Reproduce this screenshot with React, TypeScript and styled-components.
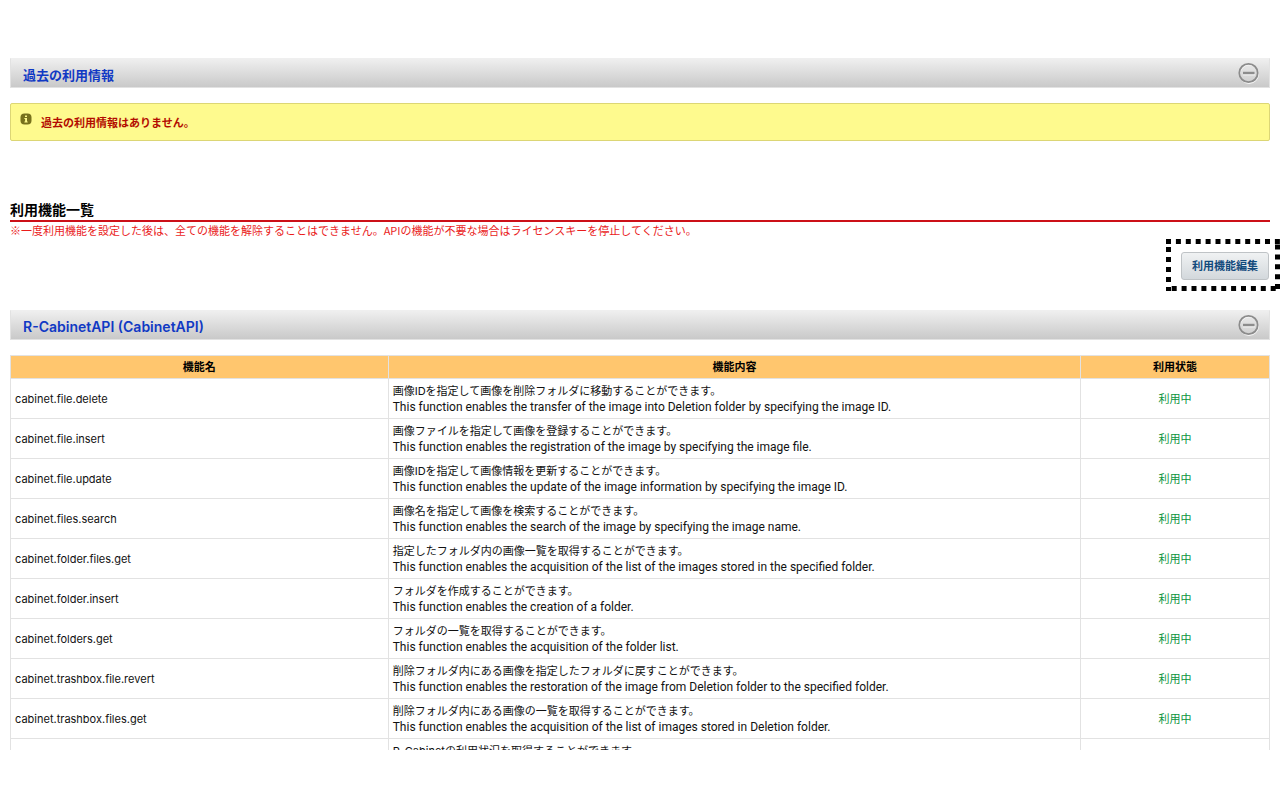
import React from "react";
import styled, { createGlobalStyle } from "styled-components";

const GlobalStyle = createGlobalStyle`
  *, *::before, *::after { box-sizing: border-box; }
  body {
    margin: 0;
    background: #fff;
    color: #111;
    font: 11px/16px Inter, "Noto Sans CJK JP", sans-serif;
  }
`;

const Page = styled.main`
  height: calc(100vh - 50px);
  padding: 58px 10px 0;
  overflow: hidden;
`;

const Bar = styled.div`
  display: flex;
  align-items: center;
  justify-content: space-between;
  height: 30px;
  padding: 0 10px 0 12px;
  border: 1px solid #e2e2e2;
  border-top-color: #efefef;
  background: linear-gradient(#efefef, #c9c9c9);
`;

const BarTitle = styled.h2<{ $large?: boolean }>`
  margin: 0;
  padding-top: 4px;
  color: #1039c4;
  font-size: ${(p) => (p.$large ? "14px" : "13px")};
  font-weight: 600;
`;

const Toggle = styled.button`
  display: flex;
  padding: 0;
  border: 0;
  background: none;
`;

const Notice = styled.div`
  display: flex;
  align-items: flex-start;
  gap: 9px;
  margin: 15px 0 59px;
  padding: 9px;
  border: 1px solid #dcd675;
  border-radius: 2px;
  background: #fefa8e;
  color: #b30c00;
  font-weight: 700;
`;

const NoticeText = styled.p`
  margin: 0;
  padding-top: 2px;
`;

const SectionTitle = styled.h1`
  margin: 0;
  border-bottom: 2px solid #cc1018;
  color: #000;
  font-size: 14px;
  font-weight: 700;
  line-height: 20px;
`;

const Warning = styled.p`
  margin: 0;
  color: #ea1c1c;
  font-family: "Noto Sans CJK JP", sans-serif;
`;

const Actions = styled.div`
  display: flex;
  justify-content: flex-end;
  padding: 14px 1px 30px;
`;

const Callout = styled.div`
  position: relative;
`;

const CalloutFrame = styled.svg`
  position: absolute;
  top: -13px;
  left: -15px;
  pointer-events: none;
`;

const EditButton = styled.button`
  display: block;
  width: 88px;
  height: 28px;
  padding: 0;
  border: 1px solid #bfc3c6;
  border-radius: 3px;
  background: linear-gradient(#f0f2f3, #d3d8dc);
  color: #124a7c;
  font: inherit;
  font-weight: 700;
`;

const Table = styled.table`
  width: 100%;
  margin-top: 15px;
  border-collapse: collapse;
  table-layout: fixed;
`;

const Head = styled.th<{ $width: string }>`
  width: ${(p) => p.$width};
  height: 23px;
  padding: 0;
  border: 1px solid #e2e2e2;
  background: #ffc66e;
  color: #000;
  font-weight: 700;
`;

const Cell = styled.td<{ $status?: boolean }>`
  height: 40px;
  padding: 4px 4px 3px;
  border: 1px solid #e2e2e2;
  color: ${(p) => (p.$status ? "#0a9440" : "inherit")};
  text-align: ${(p) => (p.$status ? "center" : "left")};
`;

const Line = styled.div<{ $latin?: boolean }>`
  min-height: 16px;
  font-family: ${(p) => (p.$latin ? "Roboto, sans-serif" : "inherit")};
  font-size: ${(p) => (p.$latin ? "12px" : "11px")};
`;

type Feature = { name?: string; ja: string; en?: string };

const features: Feature[] = [
  { name: "cabinet.file.delete", ja: "画像IDを指定して画像を削除フォルダに移動することができます。", en: "This function enables the transfer of the image into Deletion folder by specifying the image ID." },
  { name: "cabinet.file.insert", ja: "画像ファイルを指定して画像を登録することができます。", en: "This function enables the registration of the image by specifying the image file." },
  { name: "cabinet.file.update", ja: "画像IDを指定して画像情報を更新することができます。", en: "This function enables the update of the image information by specifying the image ID." },
  { name: "cabinet.files.search", ja: "画像名を指定して画像を検索することができます。", en: "This function enables the search of the image by specifying the image name." },
  { name: "cabinet.folder.files.get", ja: "指定したフォルダ内の画像一覧を取得することができます。", en: "This function enables the acquisition of the list of the images stored in the specified folder." },
  { name: "cabinet.folder.insert", ja: "フォルダを作成することができます。", en: "This function enables the creation of a folder." },
  { name: "cabinet.folders.get", ja: "フォルダの一覧を取得することができます。", en: "This function enables the acquisition of the folder list." },
  { name: "cabinet.trashbox.file.revert", ja: "削除フォルダ内にある画像を指定したフォルダに戻すことができます。", en: "This function enables the restoration of the image from Deletion folder to the specified folder." },
  { name: "cabinet.trashbox.files.get", ja: "削除フォルダ内にある画像の一覧を取得することができます。", en: "This function enables the acquisition of the list of images stored in Deletion folder." },
  { ja: "R-Cabinetの利用状況を取得することができます。" },
];

function CollapseButton({ label }: { label: string }) {
  return (
    <Toggle type="button" aria-label={label}>
      <svg width="22" height="22" viewBox="0 0 22 22" fill="none">
        <circle cx="12" cy="12" r="9.2" stroke="#f6f6f6" strokeWidth="1.6" />
        <circle cx="11.5" cy="11" r="9.2" stroke="#8c8c8c" strokeWidth="1.8" />
        <path d="M6 12.8h12" stroke="#f6f6f6" strokeWidth="1.2" />
        <path d="M6 11h11.5" stroke="#8c8c8c" strokeWidth="2.4" />
      </svg>
    </Toggle>
  );
}

function InfoIcon() {
  return (
    <svg width="12" height="12" viewBox="0 0 12 12" aria-hidden="true">
      <rect x="0.5" y="0.5" width="11" height="11" rx="4" fill="#77711c" />
      <path d="M5 2.4h2v1.5H5zM4.4 4.9H7v3.6h.7v1H4.400v-1h.7V5.900h-.7z" fill="#fefa8e" />
    </svg>
  );
}

function DottedFrame() {
  return (
    <CalloutFrame width="114" height="52" viewBox="0 0 114 52" aria-hidden="true">
      <g stroke="#000" strokeWidth="5" fill="none">
        <path d="M0 2.500H114" strokeDasharray="5 4.900" />
        <path d="M2.500 8V52" strokeDasharray="5 5" />
        <path d="M5.700 49.500H114" strokeDasharray="5 4.900" />
        <path d="M111.500 5.500V52" strokeDasharray="5 4.900" />
      </g>
    </CalloutFrame>
  );
}

export default function App() {
  return (
    <>
      <GlobalStyle />
      <Page>
        <Bar>
          <BarTitle>過去の利用情報</BarTitle>
          <CollapseButton label="過去の利用情報を閉じる" />
        </Bar>
        <Notice>
          <InfoIcon />
          <NoticeText>過去の利用情報はありません。</NoticeText>
        </Notice>
        <SectionTitle>利用機能一覧</SectionTitle>
        <Warning>
          ※一度利用機能を設定した後は、全ての機能を解除することはできません。APIの機能が不要な場合はライセンスキーを停止してください。
        </Warning>
        <Actions>
          <Callout>
            <EditButton type="button">利用機能編集</EditButton>
            <DottedFrame />
          </Callout>
        </Actions>
        <Bar>
          <BarTitle $large>R-CabinetAPI (CabinetAPI)</BarTitle>
          <CollapseButton label="R-CabinetAPIを閉じる" />
        </Bar>
        <Table>
          <thead>
            <tr>
              <Head $width="30%">機能名</Head>
              <Head $width="55%">機能内容</Head>
              <Head $width="15%">利用状態</Head>
            </tr>
          </thead>
          <tbody>
            {features.map(({ name, ja, en }) => (
              <tr key={ja}>
                <Cell>{name}</Cell>
                <Cell>
                  <Line>{ja}</Line>
                  <Line $latin>{en}</Line>
                </Cell>
                <Cell $status>{name && "利用中"}</Cell>
              </tr>
            ))}
          </tbody>
        </Table>
      </Page>
    </>
  );
}
